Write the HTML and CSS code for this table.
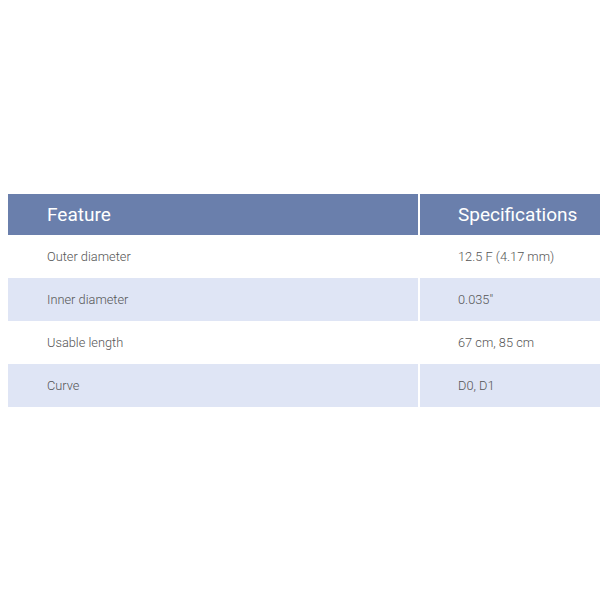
FILE: index.html
```html
<!DOCTYPE html>
<html>
<head>
<meta charset="utf-8">
<link rel="stylesheet" href="styles.css">
</head>
<body>
<table class="spec">
  <thead>
    <tr><th class="c1">Feature</th><th class="c2">Specifications</th></tr>
  </thead>
  <tbody>
    <tr><td>Outer diameter</td><td>12.5 F (4.17 mm)</td></tr>
    <tr class="alt"><td>Inner diameter</td><td>0.035"</td></tr>
    <tr><td>Usable length</td><td>67 cm, 85 cm</td></tr>
    <tr class="alt"><td>Curve</td><td>D0, D1</td></tr>
  </tbody>
</table>
</body>
</html>
```
FILE: styles.css
```css
html, body { background: #fff; }
body {
  margin: 0;
  padding: 194px 0 0 8px;
  font-family: Roboto, "Liberation Sans", sans-serif;
}
.spec {
  width: 592px;
  border-collapse: collapse;
  table-layout: fixed;
}
.spec th, .spec td {
  text-align: left;
  padding: 0 0 0 39px;
  border-left: 2px solid #fff;
}
.spec th:first-child, .spec td:first-child { border-left: none; }
.spec th + th, .spec td + td { padding-left: 38px; }
.spec .c1 { width: 371px; }
.spec th {
  background: #6a7fac;
  color: #fff;
  font-weight: 400;
  font-size: 19px;
  height: 41px;
}
.spec td {
  height: 43px;
  font-size: 12.8px;
  font-weight: 300;
  color: #555;
}
.spec tr.alt td { background: #dfe5f5; }
```
